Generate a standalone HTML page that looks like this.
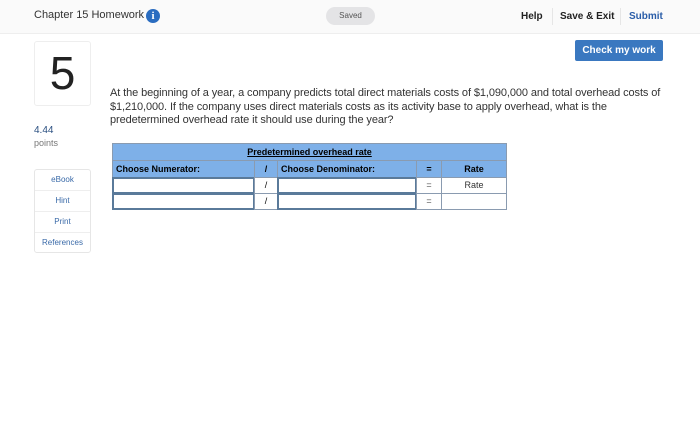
<html><head><style>
body{margin:0;width:700px;height:442px;background:#fff;font-family:"Liberation Sans",sans-serif;position:relative;overflow:hidden}
.a{position:absolute}
.hdr{left:0;top:0;width:700px;height:33px;background:#fafafa;border-bottom:1px solid #eee}
.c{position:absolute;box-sizing:border-box;font-size:9px;line-height:15px;padding:0 3px;border:1px solid #8a9bb0}
.b{background:#7eb0e8}
.in{border:2px solid #5a7a9a;background:#fff}
.ct{text-align:center}
</style></head><body>
<div class="a hdr"></div>
<div class="a" style="left:34px;top:9px;font-size:11px;color:#333">Chapter 15 Homework</div>
<div class="a" style="left:146px;top:9px;width:14px;height:14px;border-radius:50%;background:#2a6cc0;color:#fff;font-size:11px;font-weight:bold;text-align:center;line-height:14px;font-family:'Liberation Serif'">i</div>
<div class="a" style="left:326px;top:7px;width:49px;height:18px;border-radius:9px;background:#e4e4e6;font-size:8px;color:#555;text-align:center;line-height:18px">Saved</div>
<div class="a" style="left:521px;top:11px;font-size:10px;font-weight:bold;color:#222">Help</div>
<div class="a" style="left:552px;top:8px;width:1px;height:17px;background:#e6e6e6"></div>
<div class="a" style="left:560px;top:11px;font-size:10px;font-weight:bold;color:#222">Save &amp; Exit</div>
<div class="a" style="left:620px;top:8px;width:1px;height:17px;background:#e6e6e6"></div>
<div class="a" style="left:629px;top:11px;font-size:10px;font-weight:bold;color:#2a5da8">Submit</div>
<div class="a" style="left:575px;top:40px;width:88px;height:21px;background:#3a78c0;border-radius:2px;color:#fff;font-size:10px;font-weight:bold;text-align:center;line-height:21px">Check my work</div>
<div class="a" style="left:34px;top:41px;width:55px;height:63px;border:1px solid #eee;border-radius:3px;text-align:center;font-size:46px;line-height:63px;color:#222">5</div>
<div class="a" style="left:110px;top:87px;width:580px;font-size:11px;line-height:13.5px;color:#333;letter-spacing:-0.1px">At the beginning of a year, a company predicts total direct materials costs of $1,090,000 and total overhead costs of<br>$1,210,000. If the company uses direct materials costs as its activity base to apply overhead, what is the<br>predetermined overhead rate it should use during the year?</div>
<div class="a" style="left:34px;top:125px;font-size:10px;color:#2a4f80">4.44</div>
<div class="a" style="left:34px;top:138px;font-size:9px;color:#777">points</div>
<div class="a" style="left:34px;top:169px;width:55px;border:1px solid #e6e6e6;border-radius:3px;font-size:8px;color:#3a6aa8;text-align:center">
<div style="height:20px;line-height:20px;border-bottom:1px solid #eee">eBook</div>
<div style="height:20px;line-height:20px;border-bottom:1px solid #eee">Hint</div>
<div style="height:20px;line-height:20px;border-bottom:1px solid #eee">Print</div>
<div style="height:19px;line-height:19px">References</div></div>

<div class="c b ct" style="left:112px;top:143px;width:395px;height:18px;line-height:17px;font-weight:bold;text-decoration:underline">Predetermined overhead rate</div>
<div class="c b" style="left:112px;top:160px;width:143px;height:18px;line-height:16px;font-weight:bold">Choose Numerator:</div>
<div class="c b ct" style="left:254px;top:160px;width:24px;height:18px;line-height:16px;font-weight:bold">/</div>
<div class="c b" style="left:277px;top:160px;width:140px;height:18px;line-height:16px;font-weight:bold">Choose Denominator:</div>
<div class="c b ct" style="left:416px;top:160px;width:26px;height:18px;line-height:16px;font-weight:bold">=</div>
<div class="c b ct" style="left:441px;top:160px;width:66px;height:18px;line-height:16px;font-weight:bold">Rate</div>

<div class="c in" style="left:112px;top:177px;width:143px;height:17px"></div>
<div class="c ct" style="left:254px;top:177px;width:24px;height:17px">/</div>
<div class="c in" style="left:277px;top:177px;width:140px;height:17px"></div>
<div class="c ct" style="left:416px;top:177px;width:26px;height:17px;color:#555">=</div>
<div class="c ct" style="left:441px;top:177px;width:66px;height:17px;color:#333">Rate</div>

<div class="c in" style="left:112px;top:193px;width:143px;height:17px"></div>
<div class="c ct" style="left:254px;top:193px;width:24px;height:17px">/</div>
<div class="c in" style="left:277px;top:193px;width:140px;height:17px"></div>
<div class="c ct" style="left:416px;top:193px;width:26px;height:17px;color:#555">=</div>
<div class="c ct" style="left:441px;top:193px;width:66px;height:17px"></div>
</body></html>
